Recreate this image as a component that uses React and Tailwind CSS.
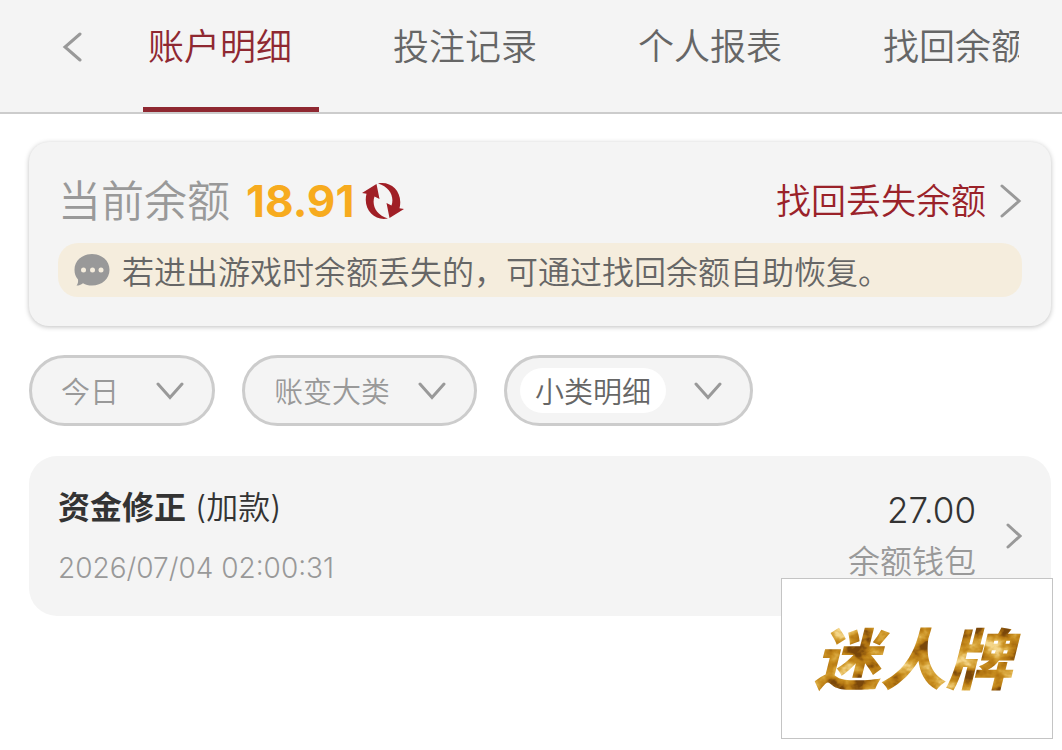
import React, { useState } from "react";

const tabs = ["账户明细", "投注记录", "个人报表", "找回余额"];

const records = [
  {
    id: 1,
    title: "资金修正",
    note: "(加款)",
    time: "2026/07/04 02:00:31",
    amount: "27.00",
    wallet: "余额钱包",
  },
];

const Chevron = ({ points, className, strokeWidth = 3, ...rest }) => (
  <svg
    className={className}
    fill="none"
    stroke="#999999"
    strokeWidth={strokeWidth}
    strokeLinecap="round"
    strokeLinejoin="miter"
    aria-hidden="true"
    {...rest}
  >
    <polyline points={points} />
  </svg>
);

const RefreshIcon = () => (
  <svg className="h-10 w-[42px]" viewBox="0 0 42 40" fill="#a01f26" aria-hidden="true">
    {/* left arrow, pointing up */}
    <path d="M0 12 L14.500 3 L17.500 18 L12.500 15.500 C9.500 24 14 34 26 37.500 C13 40.500 .5 29 4.500 12.800 Z" />
    {/* right arrow, pointing down */}
    <path d="M42 28 L27.500 37 L24.500 22 L29.500 24.500 C32.500 16 28 6 16 2.500 C29 -.5 41.500 11 37.500 27.200 Z" />
  </svg>
);

const ChatIcon = () => (
  <svg className="h-8 w-9 shrink-0" viewBox="0 0 36 32" aria-hidden="true">
    <path
      d="M18 0 C28 0 35.500 6.800 35.500 15.800 C35.500 25 28 31.500 18 31.500 C14.500 31.500 11.500 30.700 9 29.200 C7 30.800 5 31.500 2.500 31.500 C4 29.800 4.300 28 4 25.500 C1.500 22.700 .5 19.500 .5 15.800 C.5 6.800 8 0 18 0 Z"
      fill="#999999"
    />
    <circle cx="9.500" cy="16" r="2.500" fill="#f5eddd" />
    <circle cx="18.500" cy="16" r="2.500" fill="#f5eddd" />
    <circle cx="27" cy="16" r="2.500" fill="#f5eddd" />
  </svg>
);

// Gold foil wordmark
const BrandLogo = () => (
  <svg className="h-20 w-[230px]" viewBox="0 0 230 80" role="img" aria-label="迷人牌">
    <defs>
      <filter
        id="foil"
        filterUnits="userSpaceOnUse"
        x="0"
        y="0"
        width="230"
        height="80"
        colorInterpolationFilters="sRGB"
      >
        <feTurbulence type="fractalNoise" baseFrequency="0.04 0.05" numOctaves="4" seed="8" />
        <feColorMatrix
          values="2.2 0 0 0 -0.65
                  2.2 0 0 0 -0.65
                  2.2 0 0 0 -0.65
                  0 0 0 0 1"
        />
        <feComponentTransfer result="gold">
          <feFuncR type="table" tableValues="0.48 0.7 0.78 0.86 0.96" />
          <feFuncG type="table" tableValues="0.28 0.46 0.55 0.67 0.84" />
          <feFuncB type="table" tableValues="0.04 0.07 0.12 0.26 0.54" />
        </feComponentTransfer>
        <feComposite in="gold" in2="SourceGraphic" operator="in" />
      </filter>
    </defs>
    <text
      x="12"
      y="65"
      fontSize="66"
      fontWeight="900"
      fontStyle="italic"
      fill="#c8922a"
      filter="url(#foil)"
    >
      迷人牌
    </text>
  </svg>
);

const FilterSelect = ({ label, options, wide, active }) => (
  <div
    className={`flex h-[71px] items-center justify-between gap-[28px] rounded-full border-[3px] border-[#cccccc] bg-[#f4f4f4] pr-[28px] ${
      active ? "pl-[13px]" : "pl-[29px]"
    } ${wide ? "min-w-[186px]" : ""}`}
  >
    <select
      aria-label={label}
      className={`field-sizing-content h-[45px] appearance-none rounded-full font-['Noto_Sans_CJK_SC',sans-serif] text-[29px] leading-[45px] font-[350] outline-none ${
        active ? "bg-white px-[15px] text-[#666666]" : "bg-transparent text-[#999999]"
      }`}
    >
      {options.map((option) => (
        <option key={option}>{option}</option>
      ))}
    </select>
    <Chevron className="h-[18px] w-7" viewBox="0 0 28 18" points="2,2 14,15.500 26,2" />
  </div>
);

const App = () => {
  const [activeTab, setActiveTab] = useState(0);

  return (
    <div className="min-h-screen bg-white font-['Inter','Noto_Sans_CJK_SC',sans-serif]">
      {/* Top tabs */}
      <header className="flex h-[114px] border-b-2 border-[#cccccc] bg-[#f4f4f4] pr-[43px]">
        <button
          type="button"
          aria-label="返回"
          className="flex h-[94px] w-[143px] shrink-0 items-center justify-center"
        >
          <Chevron className="h-[30px] w-5" viewBox="0 0 20 30" points="18,2 3,15 18,28" />
        </button>
        <nav className="flex min-w-0 flex-1 gap-[69px] overflow-hidden">
          {tabs.map((tab, index) => (
            <button
              key={tab}
              type="button"
              onClick={() => setActiveTab(index)}
              className={`w-[176px] shrink-0 border-b-[5px] px-[5px] pb-[13px] text-left text-[36px] font-[350] whitespace-nowrap ${
                index === activeTab
                  ? "border-[#8f2831] text-[#8f2831]"
                  : "border-transparent text-[#666666]"
              }`}
            >
              {tab}
            </button>
          ))}
        </nav>
      </header>

      <main className="pt-[28px] pr-[11px] pb-[29px] pl-[29px]">
        {/* Balance card */}
        <section className="rounded-[20px] bg-[#f4f4f4] p-[29px] shadow-[0_1px_5px_rgba(0,0,0,0.25)]">
          <div className="flex h-[60px] items-center justify-between">
            <div className="flex items-center">
              <span className="text-[43px] font-[350] text-[#999999]">当前余额</span>
              <span className="ml-4 text-[44px] font-bold text-[#f7ab1e]">18.91</span>
              <button type="button" aria-label="刷新" className="ml-2">
                <RefreshIcon />
              </button>
            </div>
            <a
              href="#recover"
              className="flex items-center gap-[14px] text-[35px] font-[350] text-[#9a2229]"
            >
              找回丢失余额
              <Chevron className="h-[34px] w-[22px]" viewBox="0 0 22 34" points="2,2 19,17 2,32" />
            </a>
          </div>
          <p className="mt-3 flex h-[54px] items-center gap-3 rounded-[20px] bg-[#f5eddd] px-4 font-['Noto_Sans_CJK_SC',sans-serif] text-[32px] font-[350] whitespace-nowrap text-[#666666]">
            <ChatIcon />
            若进出游戏时余额丢失的，可通过找回余额自助恢复。
          </p>
        </section>

        {/* Filters */}
        <div className="mt-[29px] flex gap-[27px]">
          <FilterSelect label="日期" options={["今日", "昨日"]} wide />
          <FilterSelect label="大类" options={["账变大类"]} />
          <FilterSelect label="小类" options={["小类明细"]} active />
        </div>

        {/* Records */}
        <ul className="mt-[30px]">
          {records.map((record) => (
            <li key={record.id}>
              <a
                href="#record"
                className="flex h-[160px] items-center rounded-[28px] bg-[#f4f4f4] px-[29px]"
              >
                <div className="flex-1 pt-1">
                  <p className="text-[32px] leading-[48px] text-[#333333]">
                    <strong className="font-bold">{record.title}</strong>{" "}
                    <span className="font-[350]">{record.note}</span>
                  </p>
                  <p className="mt-3 text-[28px] leading-[48px] font-[350] text-[#999999]">
                    {record.time}
                  </p>
                </div>
                <div className="text-right">
                  <p className="text-[35px] leading-[48px] font-[350] text-[#333333]">
                    {record.amount}
                  </p>
                  <p className="mt-1 text-[32px] leading-[48px] font-[350] text-[#999999]">
                    {record.wallet}
                  </p>
                </div>
                <Chevron
                  className="ml-[30px] h-[26px] w-4"
                  viewBox="0 0 16 26"
                  points="2,2 14,13 2,24"
                />
              </a>
            </li>
          ))}
        </ul>
      </main>

      {/* Floating brand box */}
      <aside className="fixed right-[9px] bottom-[11px] flex h-[161px] w-[272px] items-center justify-center border border-[#c4c4c4] bg-white">
        <BrandLogo />
      </aside>
    </div>
  );
};

export default App;
